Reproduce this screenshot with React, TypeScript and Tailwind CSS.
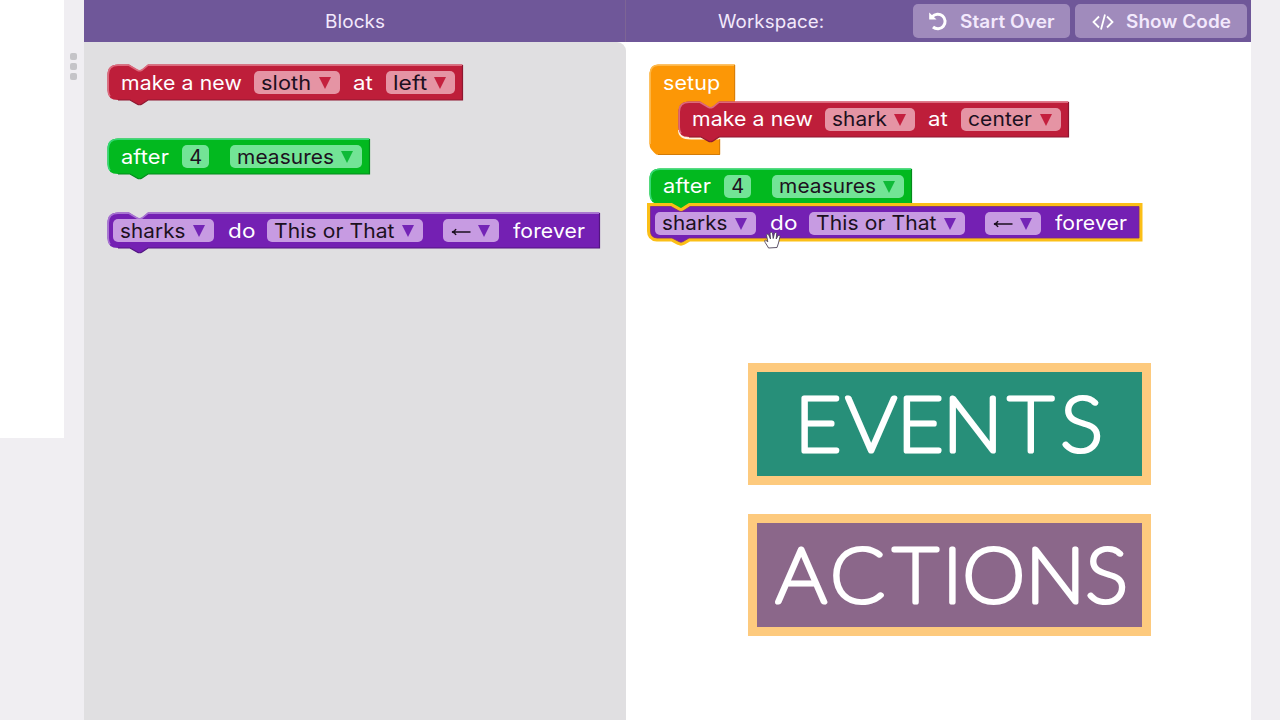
import { useLayoutEffect, useRef, useState } from "react";
import type { ReactNode } from "react";

/** A word stretched horizontally so that it takes exactly `w` pixels. */
function Word({ children, w }: { children: string; w: number }) {
  const ref = useRef<HTMLSpanElement>(null);
  const [scale, setScale] = useState(1);
  useLayoutEffect(() => {
    if (ref.current) setScale((w + 1) / ref.current.offsetWidth);
  }, [w, children]);
  return (
    <span className="flex shrink-0" style={{ width: w }}>
      <span
        ref={ref}
        className="-ml-[0.300px] shrink-0 origin-left whitespace-pre tracking-[0.100px]"
        style={{ transform: `scaleX(${scale})` }}
      >
        {children}
      </span>
    </span>
  );
}

type Tone = "red" | "green" | "purple";

const fills: Record<Tone, { body: string; light: string; dark: string; pill: string; tri: string }> = {
  red: { body: "#be1e3a", light: "#dc6a7d", dark: "#8e1730", pill: "bg-[#e594a4]", tri: "#c4203e" },
  green: { body: "#02b91f", light: "#35d873", dark: "#048a1c", pill: "bg-[#73e496]", tri: "#0fba38" },
  purple: { body: "#7420b3", light: "#a874d2", dark: "#521580", pill: "bg-[#c79be2]", tri: "#7424b6" },
};

function Pill({ tone, text, w, tw }: { tone: Tone; text: string; w: number; tw: number }) {
  return (
    <span
      className={`flex h-[23px] shrink-0 items-center justify-between rounded-[5px] pr-[9px] pl-[7.500px] text-[#1c1020] ${fills[tone].pill}`}
      style={{ width: w }}
    >
      {text === "←" ? (
        <svg width="20" height="12" viewBox="0 0 20 12" className="mt-[2px]" fill="none" stroke="#1c1020" strokeWidth="1.500">
          <path d="M1.500 6H19.500M5 3Q4 5.500 1 6Q4 6.500 5 9" />
        </svg>
      ) : (
        <Word w={tw}>{text}</Word>
      )}
      {text !== "4" && (
        <svg width="12" height="12" viewBox="0 0 12 12" className="mt-px" fill={fills[tone].tri}>
          <path d="M0 0H12L6 12Z" />
        </svg>
      )}
    </span>
  );
}

/** Puzzle-piece outline with an optional notch on top and a tab below. */
function Block({
  tone,
  w,
  notch,
  children,
}: {
  tone: Tone;
  w: number;
  notch?: boolean;
  children: ReactNode;
}) {
  const c = fills[tone];
  const top = notch ? "H22 L30 5.5 Q32.500 7 35 5.5 L41 0.500" : "";
  const body = `M0.500 11 Q0.500 0.500 11 0.500 ${top} H${w - 0.5} V36 H41 L35 40 Q32.500 41.500 30 40 L23 36 H11 Q0.500 36 0.500 26 Z`;
  return (
    <div className="relative flex h-[37px] shrink-0 items-center" style={{ width: w }}>
      <svg className="absolute top-0 left-0 overflow-visible" width={w} height="42" viewBox={`0 0 ${w} 42`}>
        <path d={body} fill={c.body} />
        <path d={`M${w - 0.5} 1 V36 H41 L35 40 Q32.500 41.500 30 40 L23 36 H11`} fill="none" stroke={c.dark} strokeWidth="1.200" />
        <path
          d={`M3 32.500 Q1.200 30 1.200 26 V11 Q1.200 1.200 11 1.200 ${notch ? "H22 L30 6 Q32.500 7.500 35 6 L41 1.200" : ""} H${w - 1}`}
          fill="none"
          stroke={c.light}
          strokeWidth="1.600"
        />
      </svg>
      <div className="relative flex w-full items-center">{children}</div>
    </div>
  );
}

/** Block drawn with the yellow outline that marks the current selection. */
function SelectedBlock({ children }: { children: ReactNode }) {
  const body = "M1.500 1.500H22L30 6Q32 7.200 34 6L41 1.500H490V33H40L34 36.600Q32 37.800 30 36.600L23 33H8Q1.500 32.500 1.500 26Z";
  return (
    <div className="relative flex h-[37px] w-[490px] shrink-0 items-center">
      <svg className="absolute top-0 left-0 overflow-visible" width="490" height="42" viewBox="0 0 490 42">
        <path d={body} fill="#7420b3" stroke="#fbbf17" strokeWidth="7" />
        <path d={body} fill="#7420b3" stroke="#7a2a86" strokeWidth="0.800" />
      </svg>
      <div className="relative flex w-full items-center">{children}</div>
    </div>
  );
}

function MakeNew({ kind, place, w, kw, ktw, pw, ptw }: { kind: string; place: string; w: number; kw: number; ktw: number; pw: number; ptw: number }) {
  return (
    <Block tone="red" w={w} notch>
      <div className="flex items-center pl-[14px]">
        <Word w={120}>make a new</Word>
        <span className="w-[13px]" />
        <Pill tone="red" text={kind} w={kw} tw={ktw} />
        <span className="w-[13px]" />
        <Word w={19}>at</Word>
        <span className="w-[14px]" />
        <Pill tone="red" text={place} w={pw} tw={ptw} />
      </div>
    </Block>
  );
}

function After() {
  return (
    <Block tone="green" w={263}>
      <div className="flex items-center pl-[14px]">
        <Word w={47}>after</Word>
        <span className="w-[14px]" />
        <Pill tone="green" text="4" w={27} tw={12} />
        <span className="w-[21px]" />
        <Pill tone="green" text="measures" w={132} tw={96} />
      </div>
    </Block>
  );
}

function DanceFields() {
  return (
    <div className="flex items-center pl-[6px]">
      <Pill tone="purple" text="sharks" w={101} tw={65} />
      <span className="w-[14px]" />
      <Word w={26}>do</Word>
      <span className="w-[13px]" />
      <Pill tone="purple" text="This or That" w={156} tw={120} />
      <span className="w-[20px]" />
      <Pill tone="purple" text="←" w={56} tw={20} />
      <span className="w-[14px]" />
      <Word w={71}>forever</Word>
    </div>
  );
}

function Sign({ word, xs, fill }: { word: string; xs: string; fill: string }) {
  return (
    <div className={`h-[122px] w-[403px] border-[9.500px] border-[#fdca7e] ${fill}`}>
      <svg width="385" height="103" viewBox="0 0 385 103" className="block">
        <text
          x={xs}
          y="79"
          fill="#fff"
          stroke="#fff"
          strokeWidth="5.200"
          strokeLinejoin="round"
          fontFamily="Lato, sans-serif"
          fontWeight="100"
          fontSize="76"
          transform="scale(1.04 1)"
        >
          {word}
        </text>
      </svg>
    </div>
  );
}

export default function App() {
  return (
    <div className="flex h-[720px] w-[1280px] overflow-hidden bg-[#f0eef2] font-[Inter,'Noto_Sans',sans-serif] text-[20px] leading-6 text-white">
      <div className="h-[438px] w-16 shrink-0 bg-white" />
      <div className="flex w-5 shrink-0 flex-col items-center gap-[3px] pt-[53px] pr-px">
        <span className="size-[7px] rounded-[2px] bg-[#c5c4c8]" />
        <span className="size-[7px] rounded-[2px] bg-[#c5c4c8]" />
        <span className="size-[7px] rounded-[2px] bg-[#c5c4c8]" />
      </div>

      <section className="flex w-[542px] shrink-0 flex-col bg-white">
        <header className="flex h-[41.500px] shrink-0 items-center justify-center border-r border-[#7d6595] bg-[#6f5799] pt-[2px] text-[18px] text-[#f3e9fc]">
          <Word w={59}>Blocks</Word>
        </header>
        <div className="flex grow flex-col gap-[37px] rounded-tr-[9px] bg-[#e0dfe1] pt-[22.500px] pl-[23px]">
          <MakeNew kind="sloth" place="left" w={356} kw={86} ktw={49} pw={69} ptw={33} />
          <After />
          <Block tone="purple" w={493} notch>
            <DanceFields />
          </Block>
        </div>
      </section>

      <section className="flex w-[625px] shrink-0 flex-col bg-white">
        <header className="flex h-[41.500px] shrink-0 items-center bg-[#6f5799] pt-[2px] pl-[92px] text-[18px] text-[#f3e9fc]">
          <Word w={105}>Workspace:</Word>
          <button className="-mt-[2px] ml-[90px] flex h-[34px] w-[157px] items-center gap-[12px] rounded-[5px] bg-[#a08bbc] pt-[2px] pl-[15px] font-semibold">
            <svg width="20" height="20" viewBox="0 0 20 20" className="-mt-px" fill="none" stroke="#fff" strokeWidth="3">
              <path d="M4.200 5.800A7.300 7.300 0 1 1 5 16" />
              <path d="M1.200 1.500V8.500H8.500Z" fill="#fff" stroke="none" />
            </svg>
            <Word w={94}>Start Over</Word>
          </button>
          <button className="-mt-[2px] ml-[5px] flex h-[34px] w-[172px] items-center gap-[12px] rounded-[5px] bg-[#a08bbc] pt-[2px] pl-[17px] font-semibold">
            <svg width="22" height="16" viewBox="0 0 22 16" fill="none" stroke="#fff" strokeWidth="1.800">
              <path d="M7 2.500L1.500 8L7 13.500M15 2.500L20.500 8L15 13.500M13 0.500L9 15.500" />
            </svg>
            <Word w={104}>Show Code</Word>
          </button>
        </header>

        <div className="flex h-[321px] shrink-0 flex-col pt-[22.500px] pl-[23px]">
          <div className="relative h-[91px] shrink-0">
            <svg className="absolute top-0 left-0" width="90" height="92" viewBox="0 0 90 92">
              <path
                d="M0.500 9Q1 1 9 0.500H86V45H42Q30 37 30 45V64Q31 73 40 73.500H71V91H10Q7 91 5 88.500L2 85Q0.500 83 0.500 80Z"
                fill="#fc9706"
              />
              <path d="M1.200 80V9Q2 1.200 9 1.200H85.500" fill="none" stroke="#fdb84a" strokeWidth="1.500" />
              <path d="M30 66Q30 74.500 42 74.500H71" fill="none" stroke="#fff3df" strokeWidth="2" />
              <path d="M85.700 1V36M70.700 75V90.500H9" fill="none" stroke="#d27b08" strokeWidth="1" />
            </svg>
            <div className="relative flex flex-col">
              <div className="flex h-[36.500px] items-center pt-[2px] pl-[14px]">
                <Word w={56}>setup</Word>
              </div>
              <div className="flex pl-[29px]">
                <MakeNew kind="shark" place="center" w={391} kw={90} ktw={54} pw={100} ptw={63} />
              </div>
            </div>
          </div>
          <div className="relative z-0 mt-[12.500px] flex flex-col">
            <After />
            <div className="relative">
              <SelectedBlock>
                <DanceFields />
              </SelectedBlock>
              <svg className="absolute top-[25.500px] left-[114px]" width="20" height="20" viewBox="0 0 20 20">
                <path
                  d="M5 17L2.200 12.500Q1 10.500 2.500 10L4.800 11.800L3.500 5Q4 3.500 5.500 4.500L7.500 9L7 3Q8 1.200 9.500 3L10.200 8.500L11.500 3Q13 1.800 13.700 3.500L13.200 9L15.200 5.500Q17 4.800 17 6.500L15.500 13L14 17.500L5.500 18Z"
                  fill="#fff"
                  stroke="#4d4158"
                  strokeWidth="0.900"
                  strokeLinejoin="round"
                />
              </svg>
            </div>
          </div>
        </div>

        <div className="flex flex-col gap-[29px] pl-[122px]">
          <Sign word="EVENTS" xs="36.6 85.6 134.8 179.2 241.5 292" fill="bg-[#278f79]" />
          <Sign word="ACTIONS" xs="18.3 70.6 130.9 178.5 197.9 258.5 316" fill="bg-[#8b678a]" />
        </div>
      </section>
    </div>
  );
}
